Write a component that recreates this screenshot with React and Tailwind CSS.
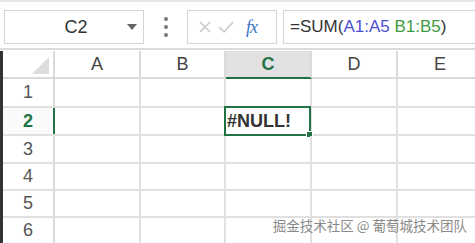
import React from 'react';

const cols = ['A', 'B', 'C', 'D', 'E'];
const rows = [
  { n: 1, h: 'h-[29px]' },
  { n: 2, h: 'h-[28px]' },
  { n: 3, h: 'h-[28px]' },
  { n: 4, h: 'h-[27px]' },
  { n: 5, h: 'h-[27px]' },
  { n: 6, h: 'h-[27px]' },
];
const colW = ['w-[86px]', 'w-[85px]', 'w-[86px]', 'w-[86px]', 'w-[86px]'];

export default function App() {
  return (
    <div className="relative w-[475px] h-[243px] overflow-hidden bg-white font-['Liberation_Sans',Arial,sans-serif] text-[#444]">
      {/* Toolbar */}
      <div className="h-[50px] flex items-start pt-[8px] border-t-2 border-[#e6e6e6] border-b-2 border-b-[#dcdcdc] pl-[4px]">
        <div className="w-[140px] h-[34px] border border-[#d4d4d4] flex items-center relative">
          <span className="flex-1 text-center text-[18px] text-[#333] pl-[4px]">C2</span>
          <svg className="absolute left-[122px] top-[13px]" width="10" height="6" viewBox="0 0 10 6">
            <path d="M0 0 L10 0 L5 6 Z" fill="#666" />
          </svg>
        </div>
        <div className="w-[43px] h-[34px] flex flex-col items-center justify-center gap-[4px]">
          <span className="w-[4px] h-[4px] rounded-full bg-[#777]" />
          <span className="w-[4px] h-[4px] rounded-full bg-[#777]" />
          <span className="w-[4px] h-[4px] rounded-full bg-[#777]" />
        </div>
        <div className="w-[90px] h-[34px] border border-[#d4d4d4] flex items-center pl-[10px] gap-[6px]">
          <svg width="14" height="14" viewBox="0 0 14 14">
            <path d="M2 2 L12 12 M12 2 L2 12" stroke="#c8c8c8" strokeWidth="1.5" fill="none" />
          </svg>
          <svg width="16" height="14" viewBox="0 0 16 14">
            <path d="M1 7 L6 12 L15 2" stroke="#c8c8c8" strokeWidth="1.5" fill="none" />
          </svg>
          <span className="ml-[6px] italic text-[18px] text-[#3a75c4] font-['Liberation_Serif',serif] tracking-[-1px]">fx</span>
        </div>
        <div className="ml-[6px] flex-1 h-[34px] border border-r-0 border-[#d4d4d4] flex items-center pl-[6px] text-[17px] text-[#333]">
          <span>=SUM(</span>
          <span className="text-[#4a4fd0]">A1:A5</span>
          <span className="text-[#3f9a3f]">&nbsp;B1:B5</span>
          <span>)</span>
        </div>
      </div>

      {/* Grid */}
      <div className="border-l-[3px] border-[#333] mt-[1px]">
        {/* header row */}
        <div className="flex h-[28px] border-b-2 border-[#dadada] bg-white">
          <div className="w-[52px] shrink-0 border-r-2 border-[#dadada] relative">
            <svg className="absolute right-[4px] bottom-[3px]" width="17" height="17" viewBox="0 0 17 17">
              <path d="M17 0 L17 17 L0 17 Z" fill="#dcdcdc" />
            </svg>
          </div>
          {cols.map((c, i) => (
            <div
              key={c}
              className={`${colW[i]} shrink-0 flex items-center justify-center text-[18px] border-r-2 border-[#dadada] ${
                c === 'C' ? 'bg-[#e2e2e2] text-[#217346] font-bold border-b-2 border-b-[#217346] -mb-[2px]' : 'text-[#444]'
              }`}
            >
              {c}
            </div>
          ))}
        </div>
        {rows.map((r) => (
          <div key={r.n} className={`flex ${r.h} border-b-2 border-[#e0e0e0]`}>
            <div
              className={`w-[52px] shrink-0 flex items-center justify-center text-[18px] border-r-2 ${
                r.n === 2 ? 'text-[#217346] font-bold border-[#217346] bg-[#fafafa]' : 'text-[#555] border-[#dadada]'
              }`}
            >
              {r.n}
            </div>
            {cols.map((c, i) => (
              <div key={c} className={`${colW[i]} shrink-0 border-r-2 border-[#e0e0e0] relative`}>
                {r.n === 2 && c === 'C' && (
                  <div className="absolute -left-[2px] -top-[2px] -right-[1px] -bottom-[2px] border-2 border-[#217346] flex items-center pl-[1px] text-[18px] font-bold text-[#333]">
                    #NULL!
                    <span className="absolute -right-[4px] -bottom-[4px] w-[7px] h-[7px] bg-[#217346] border border-white" />
                  </div>
                )}
              </div>
            ))}
          </div>
        ))}
      </div>

      {/* watermark */}
      <div className="absolute right-[8px] top-[215px] text-[13.5px] text-[#8a8a8a] font-['Noto_Sans_CJK_SC',sans-serif] whitespace-nowrap">
        掘金技术社区 @ 葡萄城技术团队
      </div>
    </div>
  );
}
